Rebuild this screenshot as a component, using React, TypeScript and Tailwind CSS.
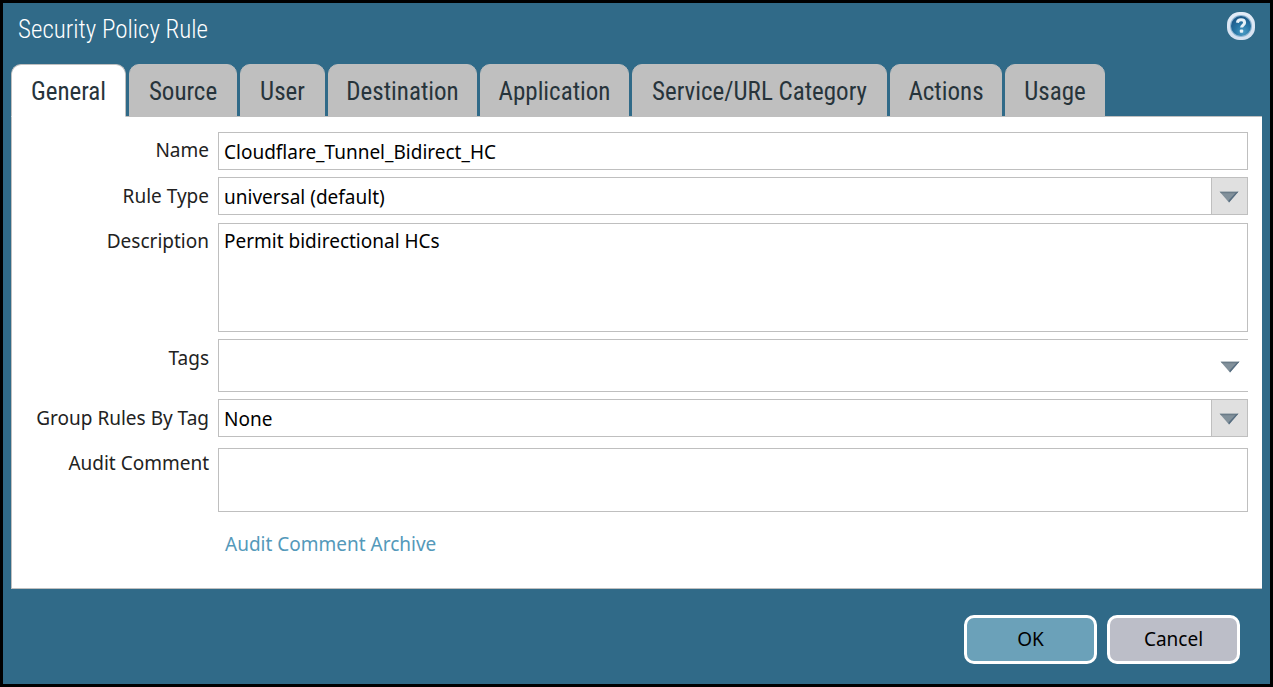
import { useState, type ReactNode } from "react";

const tabs = [
  { name: "General", width: "w-[115px]" },
  { name: "Source", width: "w-[108px]" },
  { name: "User", width: "w-[85px]" },
  { name: "Destination", width: "w-[149px]" },
  { name: "Application", width: "w-[149px]" },
  { name: "Service/URL Category", width: "w-[255px]" },
  { name: "Actions", width: "w-[112px]" },
  { name: "Usage", width: "w-[100px]" },
];

function HelpIcon() {
  return (
    <svg viewBox="0 0 28 28" className="size-7" aria-hidden="true">
      <defs>
        <linearGradient id="ring" x1="0" y1="0" x2="0" y2="1">
          <stop offset="0" stopColor="#e4edf8" />
          <stop offset="1" stopColor="#d3e0f0" />
        </linearGradient>
        <radialGradient id="ball" cx="0.6" cy="0.8" r="0.75">
          <stop offset="0" stopColor="#4b9cc6" />
          <stop offset="0.5" stopColor="#2877a6" />
          <stop offset="1" stopColor="#1d5a8a" />
        </radialGradient>
      </defs>
      <rect width="28" height="28" rx="12.500" fill="url(#ring)" />
      <circle cx="14" cy="14" r="11" fill="#8fb6d2" />
      <circle cx="14" cy="14" r="10" fill="url(#ball)" />
      <path
        d="M10.400 10.700c.3-2 1.700-2.900 3.600-2.900 2.100 0 3.600 1 3.600 2.900 0 2.300-3 2.500-3 4.900"
        fill="none"
        stroke="#e6f1f8"
        strokeWidth="3"
      />
      <rect x="12.800" y="17.500" width="3.400" height="3.200" rx="1" fill="#e6f1f8" />
    </svg>
  );
}

function Arrow() {
  return (
    <svg viewBox="0 0 20 12" className="h-3 w-5" aria-hidden="true">
      <path d="M0.500 0.500H19.500L10 11.500Z" fill="#82919b" />
      <path d="M1 1H19L18 2.200H2Z" fill="#6b7c88" />
      <path d="M19.500 0.500L10 11.500L9.500 9.500L17 1.500Z" fill="#566d80" />
    </svg>
  );
}

function Row({ id, label, offset = "pt-[5px]", children }: { id: string; label: string; offset?: string; children: ReactNode }) {
  return (
    <div className="flex gap-[9px]">
      <label htmlFor={id} className={`w-[197px] shrink-0 text-right leading-7 text-[#222] ${offset}`}>
        {label}
      </label>
      <div className="relative flex min-w-0 flex-1">{children}</div>
    </div>
  );
}

function Dropdown({ id, value, options }: { id: string; value: string; options: string[] }) {
  return (
    <>
      <select
        id={id}
        defaultValue={value}
        className="h-[38px] w-full appearance-none border border-[#bfbfbf] bg-white pt-[2px] pl-[5px] pr-10 outline-none"
      >
        {options.map((o) => (
          <option key={o}>{o}</option>
        ))}
      </select>
      <span className="pointer-events-none absolute inset-y-0 right-0 flex w-[37px] items-center justify-center border border-[#bfbfbf] bg-[#e0e0e0] pt-[2px] pr-[2px]">
        <Arrow />
      </span>
    </>
  );
}

export default function App() {
  const [active, setActive] = useState("General");
  return (
    <main className="flex min-h-screen flex-col border-3 border-black bg-[#306a88] px-2 font-['Noto_Sans',sans-serif] text-[19px] text-black">
      <header className="flex items-start justify-between pt-[9px] pr-[7px] pl-[7px]">
        <h1 className="pt-1 font-['Roboto_Condensed',sans-serif] text-[25px] leading-7 font-light text-white">Security Policy Rule</h1>
        <button type="button" aria-label="Help" className="size-7 rounded-full">
          <HelpIcon />
        </button>
      </header>

      <nav role="tablist" className="mt-5 flex gap-[3px] font-['Roboto_Condensed',sans-serif] text-[25px] leading-8 text-[#27343b]">
        {tabs.map((t) => (
          <button
            key={t.name}
            type="button"
            role="tab"
            aria-selected={active === t.name}
            onClick={() => setActive(t.name)}
            className={`h-[53px] shrink-0 rounded-t-[10px] border border-[#bfbfbf] pt-[2px] text-center whitespace-nowrap ${t.width} ${
              active === t.name ? "relative border-b-white bg-white" : "bg-[#bfbfbf]"
            }`}
          >
            {t.name}
          </button>
        ))}
      </nav>

      <section className="-mt-px flex flex-col border border-r-0 border-[#bfbfbf] bg-white pt-[15px] pr-[14px] pb-[30px]">
        <div className="flex flex-col gap-[7px]">
          <Row id="name" label="Name" offset="pt-1">
            <input id="name" defaultValue="Cloudflare_Tunnel_Bidirect_HC" className="h-[38px] w-full border border-[#bfbfbf] pt-[2px] pl-[5px] outline-none" />
          </Row>
          <Row id="type" label="Rule Type">
            <Dropdown id="type" value="universal (default)" options={["universal (default)", "intrazone", "interzone"]} />
          </Row>
        </div>
        <div className="mt-2 flex flex-col gap-[7px]">
          <Row id="description" label="Description" offset="pt-1">
            <textarea
              id="description"
              defaultValue="Permit bidirectional HCs"
              className="h-[109px] w-full resize-none border border-[#bfbfbf] pt-[3px] pl-[5px] leading-7 outline-none"
            />
          </Row>
          <Row id="tags" label="Tags">
            <input id="tags" className="h-[53px] w-full border border-r-0 border-[#bfbfbf] pl-[5px] outline-none" />
            <button type="button" aria-label="Show tags" className="absolute inset-y-0 right-0 flex w-[37px] items-center justify-center pt-[2px]">
              <Arrow />
            </button>
          </Row>
          <Row id="group" label="Group Rules By Tag">
            <Dropdown id="group" value="None" options={["None"]} />
          </Row>
        </div>
        <div className="mt-[11px]">
          <Row id="audit" label="Audit Comment" offset="pt-px">
            <textarea id="audit" className="h-[64px] w-full resize-none border border-[#bfbfbf] pt-1 pl-[5px] outline-none" />
          </Row>
        </div>
        <a href="#archive" className="mt-[18px] ml-[213px] self-start leading-7 text-[#5499ba]">
          Audit Comment Archive
        </a>
      </section>

      <footer className="flex justify-end gap-[10px] pt-[26px] pr-[22px] pb-5">
        <button type="button" className="h-[49px] w-[133px] rounded-[10px] border-3 border-white bg-[#6ba1b9]">
          OK
        </button>
        <button type="button" className="h-[49px] w-[133px] rounded-[10px] border-3 border-white bg-[#bcbec8]">
          Cancel
        </button>
      </footer>
    </main>
  );
}
